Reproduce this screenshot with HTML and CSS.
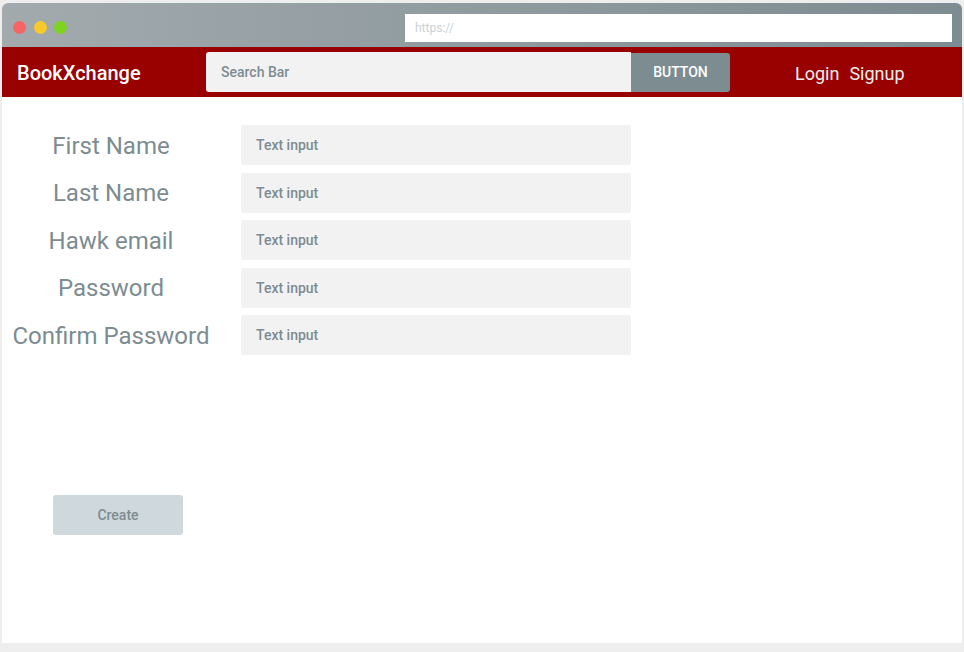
FILE: index.html
```html
<!DOCTYPE html>
<html>
<head>
<meta charset="utf-8">
<link rel="stylesheet" href="styles.css">
</head>
<body>
<div class="window">
  <div class="titlebar">
    <div class="dots">
      <span class="dot red"></span>
      <span class="dot yellow"></span>
      <span class="dot green"></span>
    </div>
    <div class="url">https://</div>
  </div>
  <nav class="nav">
    <div class="brand">BookXchange</div>
    <div class="search">Search Bar</div>
    <div class="nav-btn">BUTTON</div>
    <div class="links"><span>Login</span><span>Signup</span></div>
  </nav>
  <main class="content">
    <div class="form">
      <div class="label">First Name</div><div class="input">Text input</div>
      <div class="label">Last Name</div><div class="input">Text input</div>
      <div class="label">Hawk email</div><div class="input">Text input</div>
      <div class="label">Password</div><div class="input">Text input</div>
      <div class="label">Confirm Password</div><div class="input">Text input</div>
    </div>
    <div class="create">Create</div>
  </main>
</div>
</body>
</html>
```

FILE: styles.css
```css
* { box-sizing: border-box; }
html, body { margin: 0; padding: 0; }
body {
  background: #eeeeee;
  font-family: Roboto, "Liberation Sans", sans-serif;
  width: 964px;
  height: 652px;
  overflow: hidden;
}
.window {
  margin: 3px 2px 0 2px;
  height: 640px;
  background: #ffffff;
  border-radius: 6px 6px 0 0;
  overflow: hidden;
  display: flex;
  flex-direction: column;
}
.titlebar {
  height: 44px;
  background: linear-gradient(to right, #a2aaad, #7d8c91);
  display: flex;
  align-items: flex-start;
  padding: 11px 10px 0 11px;
}
.dots { display: flex; gap: 7.5px; flex: 1; margin-top: 6.5px; }
.dot { width: 13px; height: 13px; border-radius: 50%; display: block; }
.dot.red { background: #f56565; }
.dot.yellow { background: #f8c92b; }
.dot.green { background: #7ed321; }
.url {
  width: 547px;
  height: 28px;
  background: #ffffff;
  color: #c9d1d6;
  font-size: 12px;
  line-height: 28px;
  padding-left: 10px;
}
.nav {
  height: 50px;
  background: #990000;
  display: flex;
  align-items: center;
}
.brand {
  width: 204px;
  padding-left: 15px;
  color: #ffffff;
  font-size: 20px;
  font-weight: 500;
  padding-top: 2px;
}
.search {
  width: 425px;
  height: 40px;
  background: #f2f2f2;
  border-radius: 3px 0 0 3px;
  color: #7d8c91;
  font-size: 14px;
  font-weight: 500;
  line-height: 40px;
  padding-left: 15px;
}
.nav-btn {
  width: 99px;
  height: 39px;
  background: #7d8c91;
  border-radius: 0 3px 3px 0;
  color: #ffffff;
  font-size: 14px;
  font-weight: 500;
  text-align: center;
  line-height: 39px;
}
.links {
  margin-left: 65px;
  display: flex;
  gap: 10px;
  color: #eeeeee;
  font-size: 18px;
  padding-top: 3px;
}
.content {
  flex: 1;
  padding: 28px 0 0 0;
}
.form {
  display: grid;
  grid-template-columns: 218px 390px;
  column-gap: 21px;
  row-gap: 7.5px;
  align-items: center;
}
.label {
  text-align: center;
  color: #7d8c91;
  font-size: 24px;
  padding-top: 1px;
}
.input {
  height: 40px;
  background: #f2f2f2;
  border-radius: 2px;
  color: #7d8c91;
  font-size: 14px;
  font-weight: 500;
  line-height: 40px;
  padding-left: 15px;
}
.create {
  margin: 140px 0 0 51px;
  width: 130px;
  height: 40px;
  background: #cfd8dd;
  border-radius: 3px;
  color: #7d8c91;
  font-size: 14px;
  font-weight: 500;
  line-height: 40px;
  text-align: center;
}
```
